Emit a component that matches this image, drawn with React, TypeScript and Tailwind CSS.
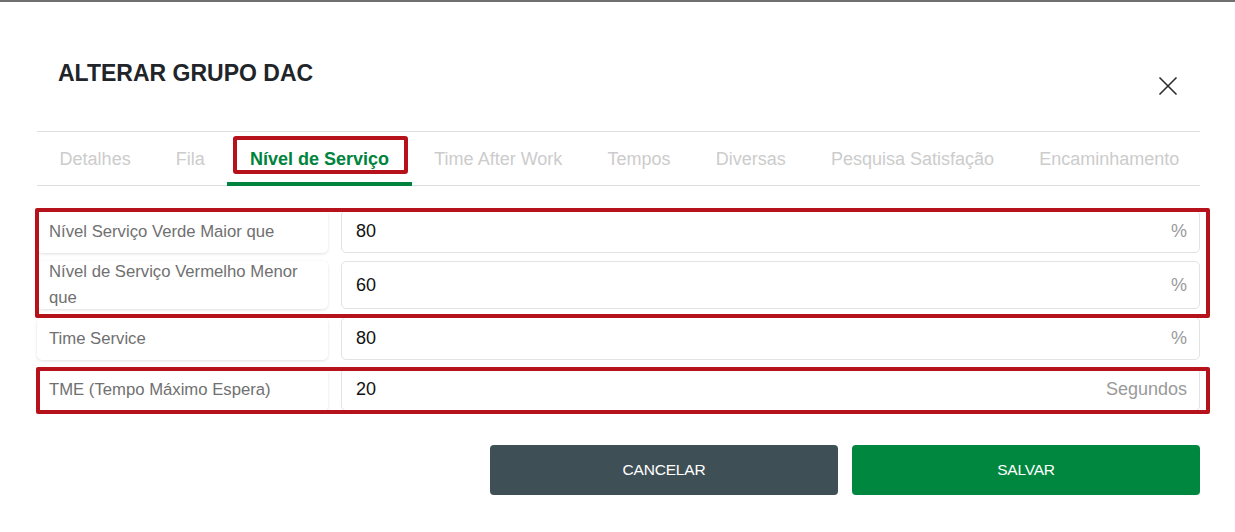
import React from "react";

const tabs = [
  "Detalhes",
  "Fila",
  "Nível de Serviço",
  "Time After Work",
  "Tempos",
  "Diversas",
  "Pesquisa Satisfação",
  "Encaminhamento",
];

const rows = [
  { label: "Nível Serviço Verde Maior que", value: "80", suffix: "%", h: "h-[43px]" },
  { label: "Nível de Serviço Vermelho Menor que", value: "60", suffix: "%", h: "h-[48px]" },
  { label: "Time Service", value: "80", suffix: "%", h: "h-[43px]" },
  { label: "TME (Tempo Máximo Espera)", value: "20", suffix: "Segundos", h: "h-[43px]" },
];

export default function App() {
  return (
    <div
      className="relative w-[1235px] h-[532px] bg-white border-t-2 border-[#707070] overflow-hidden"
      style={{ fontFamily: '"Liberation Sans", Arial, sans-serif' }}
    >
      <div className="flex items-start justify-between pl-[58px] pr-[57px] pt-[56px]">
        <h1 className="text-[23px] font-bold text-[#212529] leading-[30px]">ALTERAR GRUPO DAC</h1>
        <button className="mt-[18px] w-[20px] h-[20px] flex items-center justify-center">
          <svg width="20" height="20" viewBox="0 0 20 20">
            <path d="M1.5 1.5 L18.5 18.5 M18.5 1.5 L1.5 18.5" stroke="#2b2b2b" strokeWidth="1.6" />
          </svg>
        </button>
      </div>

      <div className="mx-[37px] mt-[35px] w-[1163px] h-[55px] border-t border-b border-[#dedede] flex items-stretch">
        {tabs.map((t, i) => {
          const active = i === 2;
          return (
            <div
              key={t}
              className={
                "relative px-[22.6px] flex items-center text-[18px] whitespace-nowrap " +
                (active ? "text-[#00843d] font-bold" : "text-[#cccccc]")
              }
            >
              <span className="pt-[1px]">{t}</span>
              {active && <div className="absolute left-0 right-0 bottom-[-1px] h-[4px] bg-[#00843d]" />}
            </div>
          );
        })}
      </div>

      <div className="mx-[37px] mt-[24px] w-[1163px] flex flex-col gap-[8px]">
        {rows.map((r) => (
          <div key={r.label} className={"flex gap-[13px] " + r.h}>
            <div className="w-[291px] shrink-0 bg-white rounded-[5px] shadow-[0_1px_3px_rgba(0,0,0,0.12)] flex items-center px-[12px] text-[16.7px] leading-[26px] text-[#707070]">
              {r.label}
            </div>
            <div className="flex-1 border border-[#e3e3e3] rounded-[5px] flex items-center justify-between pl-[14px] pr-[12px]">
              <span className="text-[18px] text-[#111]">{r.value}</span>
              <span className="text-[18px] text-[#9a9a9a]">{r.suffix}</span>
            </div>
          </div>
        ))}
      </div>

      <div className="flex justify-end gap-[14px] pr-[35px] mt-[34px]">
        <button className="w-[348px] h-[50px] rounded-[4px] bg-[#3f4f56] text-white text-[15.5px] tracking-[-0.2px]">CANCELAR</button>
        <button className="w-[348px] h-[50px] rounded-[4px] bg-[#00873f] text-white text-[15.5px] tracking-[-0.2px]">SALVAR</button>
      </div>

      {/* annotation boxes */}
      <div className="absolute left-[233px] top-[134px] w-[175px] h-[38px] border-4 border-[#b5121b] rounded-[3px]" />
      <div className="absolute left-[35px] top-[206px] w-[1175px] h-[110px] border-4 border-[#b5121b] rounded-[2px]" />
      <div className="absolute left-[36px] top-[365px] w-[1174px] h-[47px] border-4 border-[#b5121b] rounded-[2px]" />
    </div>
  );
}
